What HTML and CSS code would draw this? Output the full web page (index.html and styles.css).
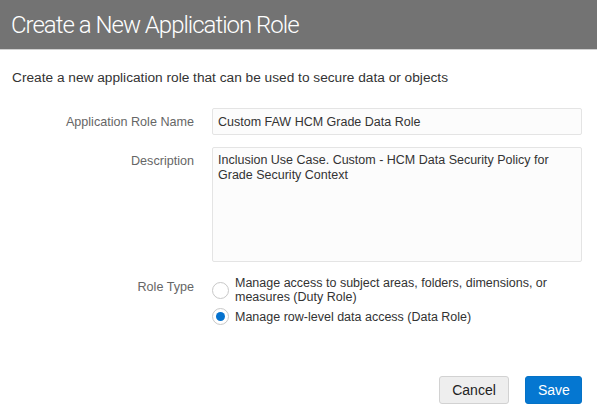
FILE: index.html
```html
<!DOCTYPE html>
<html lang="en">
<head>
    <meta charset="UTF-8">
    <title>Create a New Application Role</title>
    <link rel="stylesheet" href="styles.css">
</head>
<body>
    <div class="dialog">
        <div class="dialoghead">
            <h1 class="title">Create a New Application Role</h1>
        </div>

        <p class="intro">Create a new application role that can be used to secure data or objects</p>

        <div class="roleform">
            <label class="fieldlabel namelabel">Application Role Name</label>
            <input class="textfield" value="Custom FAW HCM Grade Data Role">

            <label class="fieldlabel desclabel">Description</label>
            <textarea class="textarea">Inclusion Use Case. Custom - HCM Data Security Policy for Grade Security Context</textarea>

            <label class="fieldlabel typelabel">Role Type</label>
            <div class="radiogroup">
                <div class="radiorow">
                    <span class="radio"></span>
                    <span class="radiotext">Manage access to subject areas, folders, dimensions, or measures (Duty Role)</span>
                </div>
                <div class="radiorow">
                    <span class="radio checked"></span>
                    <span class="radiotext">Manage row-level data access (Data Role)</span>
                </div>
            </div>
        </div>

        <div class="buttons">
            <button class="btn cancel">Cancel</button>
            <button class="btn save">Save</button>
        </div>
    </div>
</body>
</html>
```

FILE: styles.css
```css
body {
    margin: 0;
    background: #ffffff;
    font-family: "Liberation Sans", Arial, sans-serif;
    color: #333333;
}

.dialoghead {
    height: 49px;
    background-color: #737373;
    border-bottom: 1px solid #d0d0d0;
    display: flex;
    align-items: center;
    padding-left: 11px;
}

.title {
    margin: 0;
    font-family: "Roboto", "Liberation Sans", sans-serif;
    font-size: 24px;
    font-weight: 300;
    color: #ffffff;
    letter-spacing: -1px;
}

.intro {
    margin: 20px 0 0 12px;
    font-size: 13.7px;
    color: #333333;
}

.roleform {
    display: grid;
    grid-template-columns: 194px 370px;
    column-gap: 18px;
    row-gap: 12px;
    margin-top: 23px;
}

.fieldlabel {
    text-align: right;
    font-size: 12.6px;
    color: #666666;
}

.namelabel {
    align-self: center;
}

.desclabel {
    padding-top: 7px;
}

.typelabel {
    padding-top: 6px;
}

.textfield,
.textarea {
    box-sizing: border-box;
    width: 370px;
    border: 1px solid #e4e4e4;
    border-radius: 2px;
    background-color: #fcfcfc;
    font-family: "Liberation Sans", Arial, sans-serif;
    font-size: 12.5px;
    color: #333333;
    padding: 0 5px;
    outline: none;
}

.textfield {
    height: 27px;
}

.textarea {
    height: 115px;
    padding-top: 5px;
    line-height: 15px;
    resize: none;
}

.radiogroup {
    display: flex;
    flex-direction: column;
    gap: 4px;
    padding-top: 2px;
}

.radiorow {
    display: flex;
    align-items: center;
}

.radio {
    flex: none;
    box-sizing: border-box;
    width: 17px;
    height: 17px;
    border: 1px solid #c8c8c8;
    border-radius: 50%;
    background: #ffffff;
    margin-right: 6px;
    position: relative;
}

.radio.checked::after {
    content: "";
    position: absolute;
    left: 3px;
    top: 3px;
    width: 9px;
    height: 9px;
    border-radius: 50%;
    background: #0572ce;
}

.radiotext {
    font-size: 12.5px;
    line-height: 14px;
    color: #333333;
    width: 340px;
}

.buttons {
    display: flex;
    justify-content: flex-end;
    gap: 16px;
    padding-right: 15px;
    margin-top: 51px;
}

.btn {
    height: 28px;
    border-radius: 3px;
    font-family: "Liberation Sans", Arial, sans-serif;
    font-size: 14px;
    padding: 0 12px;
}

.cancel {
    width: 70px;
    background: #eeeeee;
    border: 1px solid #d2d2d2;
    color: #222222;
}

.save {
    width: 57px;
    background: #0577d1;
    border: 1px solid #0572c6;
    color: #ffffff;
}
```
